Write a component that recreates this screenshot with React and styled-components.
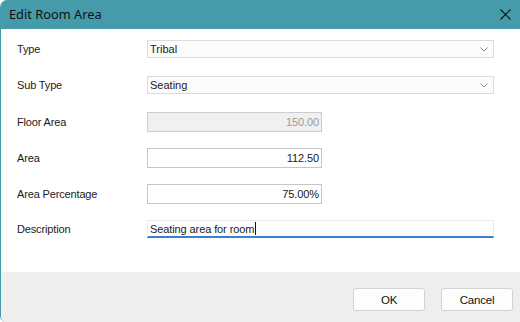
import styled, { createGlobalStyle } from "styled-components";

const Global = createGlobalStyle`
  html, body {
    margin: 0;
    padding: 0;
    background: #ffffff;
  }
  * { box-sizing: border-box; }
`;

const Window = styled.div`
  width: 520px;
  height: 322px;
  display: flex;
  flex-direction: column;
  border-left: 1px solid #469baa;
  border-radius: 7px 0 0 6px;
  overflow: hidden;
  font-family: "Liberation Sans", Arial, sans-serif;
`;

const TitleBar = styled.div`
  height: 29px;
  flex: none;
  display: flex;
  align-items: center;
  justify-content: space-between;
  padding: 0 8px 1px 8px;
  background: #469baa;
  color: #111;
  font-family: "Noto Sans", sans-serif;
  font-size: 12.8px;
`;

const CloseButton = styled.button`
  width: 14px;
  height: 14px;
  padding: 0;
  border: none;
  background: transparent;
  display: flex;
  align-items: center;
  justify-content: center;
`;

const Body = styled.div`
  height: 243px;
  flex: none;
  background: #ffffff;
  padding: 11px 0 0 16px;
  display: flex;
  flex-direction: column;
`;

const Row = styled.div`
  height: 36px;
  display: flex;
  align-items: flex-start;
`;

const Label = styled.div`
  width: 130px;
  height: ${(p) => p.$h}px;
  line-height: ${(p) => p.$h + 1}px;
  font-size: 11px;
  letter-spacing: -0.15px;
  color: #1a1a1a;
`;

const Select = styled.div`
  width: 347px;
  height: 18px;
  display: flex;
  align-items: center;
  justify-content: space-between;
  padding: 0 5px 0 2px;
  border: 1px solid #dcdcdc;
  background: #fcfcfc;
  font-size: 11px;
  color: #1a1a1a;
`;

const NumberBox = styled.div`
  width: 175px;
  height: 20px;
  display: flex;
  align-items: center;
  justify-content: flex-end;
  padding-right: 2px;
  border: 1px solid ${(p) => (p.$disabled ? "#cdcdcd" : "#c6c6c6")};
  background: ${(p) => (p.$disabled ? "#f0f0f0" : "#ffffff")};
  color: ${(p) => (p.$disabled ? "#9a9a9a" : "#1a1a1a")};
  font-size: 11px;
  letter-spacing: -0.1px;
`;

const TextBox = styled.div`
  width: 347px;
  height: 18px;
  display: flex;
  align-items: center;
  padding-left: 2px;
  border: 1px solid #ececec;
  border-bottom: 2px solid #3a7fd0;
  background: #ffffff;
  font-size: 11px;
  color: #1a1a1a;
  letter-spacing: -0.1px;
`;

const Caret = styled.span`
  display: inline-block;
  width: 1px;
  height: 13px;
  margin-left: 1px;
  background: #111;
`;

const Footer = styled.div`
  flex: 1;
  background: #eeeeee;
  display: flex;
  justify-content: flex-end;
  align-items: flex-start;
  gap: 16px;
  padding: 16px 7px 0 0;
`;

const Button = styled.button`
  width: 72px;
  height: 23px;
  border: 1px solid #d2d2d2;
  border-radius: 3px;
  background: #fdfdfd;
  font-family: "Liberation Sans", Arial, sans-serif;
  font-size: 11.5px;
  color: #111;
  letter-spacing: -0.2px;
`;

const Chevron = () => (
  <svg width="8" height="5" viewBox="0 0 8 5">
    <path d="M0.5 0.5 L4 4 L7.5 0.5" fill="none" stroke="#8a8a8a" strokeWidth="1" />
  </svg>
);

const App = () => {
  return (
    <>
      <Global />
      <Window>
        <TitleBar>
          <span>Edit Room Area</span>
          <CloseButton>
            <svg width="11" height="11" viewBox="0 0 11 11">
              <path d="M0.5 0.5 L10.5 10.5 M10.5 0.5 L0.5 10.5" stroke="#111" strokeWidth="1.1" />
            </svg>
          </CloseButton>
        </TitleBar>
        <Body>
          <Row>
            <Label $h={18}>Type</Label>
            <Select>
              <span>Tribal</span>
              <Chevron />
            </Select>
          </Row>
          <Row>
            <Label $h={18}>Sub Type</Label>
            <Select>
              <span>Seating</span>
              <Chevron />
            </Select>
          </Row>
          <Row>
            <Label $h={20}>Floor Area</Label>
            <NumberBox $disabled>150.00</NumberBox>
          </Row>
          <Row>
            <Label $h={20}>Area</Label>
            <NumberBox>112.50</NumberBox>
          </Row>
          <Row>
            <Label $h={20}>Area Percentage</Label>
            <NumberBox>75.00%</NumberBox>
          </Row>
          <Row>
            <Label $h={18}>Description</Label>
            <TextBox>
              Seating area for room
              <Caret />
            </TextBox>
          </Row>
        </Body>
        <Footer>
          <Button>OK</Button>
          <Button>Cancel</Button>
        </Footer>
      </Window>
    </>
  );
};

export default App;
